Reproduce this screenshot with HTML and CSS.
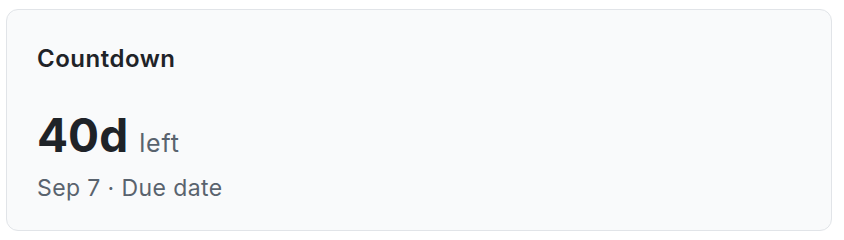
FILE: index.html
```html
<!DOCTYPE html>
<html lang="en">
<head>
  <meta charset="UTF-8">
  <meta name="viewport" content="width=device-width, initial-scale=1.0">
  <title>Countdown</title>

  <link rel="stylesheet" href="styles.css">
</head>

<body>
  <div class="card">
    <h2 class="card-title">Countdown</h2>
    <div class="count">
      <span class="count-value">40d</span>
      <span class="count-unit">left</span>
    </div>
    <p class="due">Sep 7 · Due date</p>
  </div>
</body>
</html>
```

FILE: styles.css
```css
body {
  margin: 0;
  padding: 9px 12px 9px 6px;
  font-family: Inter, "Noto Sans", sans-serif;
  background-color: #fff;
  color: #1f2328;
}

.card {
  box-sizing: border-box;
  height: 222px;
  padding: 34px 30px;
  border: 1px solid #e1e4e8;
  border-radius: 12px;
  background-color: #f9fafb;
}

.card-title {
  margin: 0;
  font-size: 24px;
  font-weight: 600;
  line-height: 30px;
  letter-spacing: 0.5px;
}

.count {
  display: flex;
  align-items: baseline;
  gap: 11px;
  margin-top: 33px;
  height: 56px;
}

.count-value {
  font-size: 46px;
  font-weight: 700;
  line-height: 56px;
}

.count-unit {
  font-size: 25px;
  letter-spacing: 0.9px;
  color: #59636e;
}

.due {
  margin: 10px 0 0;
  font-size: 23px;
  line-height: 30px;
  letter-spacing: 0.4px;
  color: #59636e;
}
```
